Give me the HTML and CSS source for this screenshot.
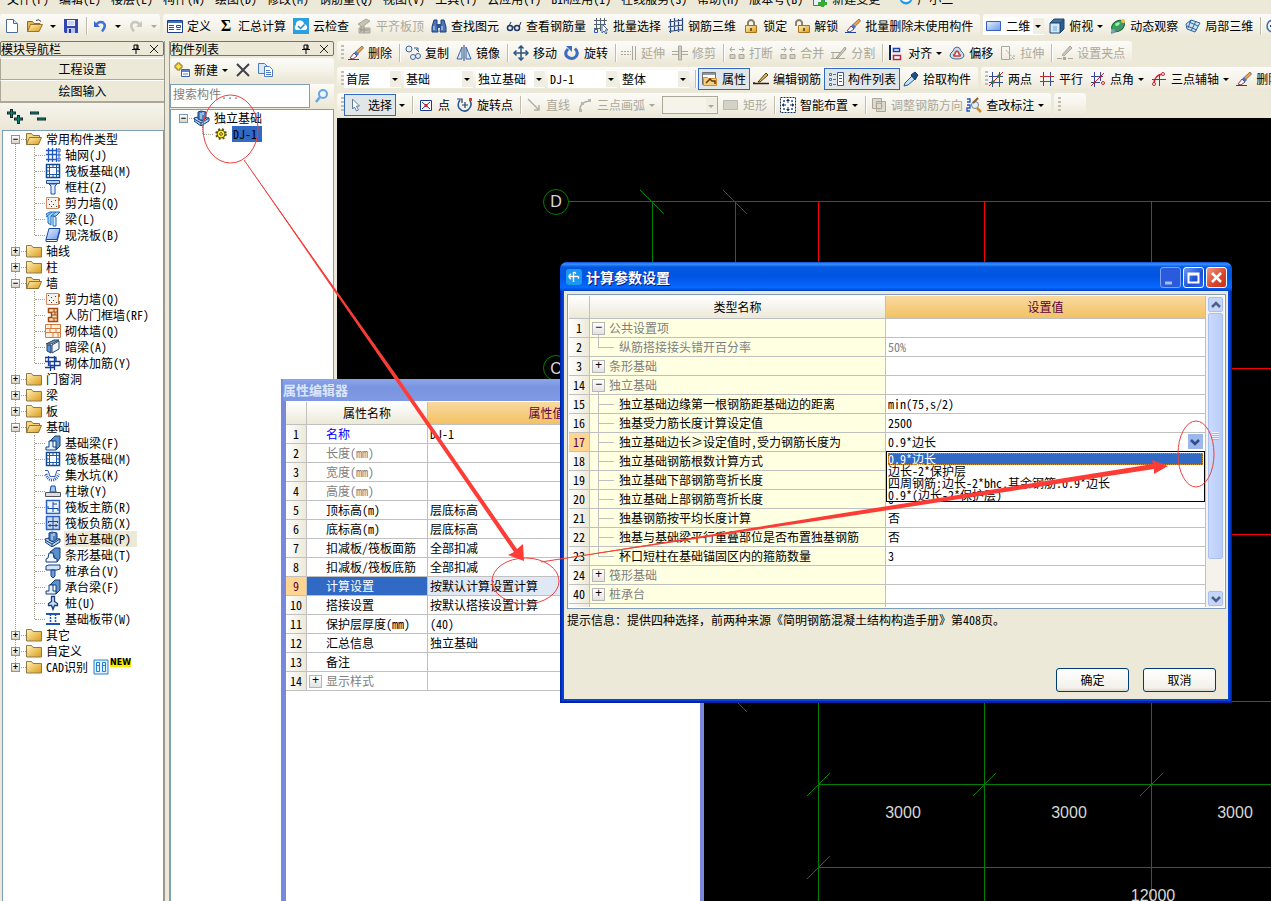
FILE: index.html
```html
<!DOCTYPE html>
<html lang="zh-CN">
<head>
<meta charset="utf-8">
<title>计算参数设置</title>
<link rel="stylesheet" href="styles.css">
</head>
<body>
<svg class="defs" aria-hidden="true">
<defs>
<linearGradient id="gy" x1="0" y1="0" x2="1" y2="1"><stop offset="0" stop-color="#fff3b8"/><stop offset="1" stop-color="#dd9a18"/></linearGradient>
<linearGradient id="gb" x1="0" y1="0" x2="1" y2="1"><stop offset="0" stop-color="#e4f1ff"/><stop offset="1" stop-color="#6f9bea"/></linearGradient>
<symbol id="new" viewBox="0 0 16 16"><path d="M2.500 1.500h7l4 4v9h-11z" fill="#fff" stroke="#4b6c98"/><path d="M9.500 1.500v4h4" fill="#d3e4f6" stroke="#4b6c98"/></symbol>
<symbol id="open" viewBox="0 0 16 16"><path d="M.5 13.500v-10h5l1.500 2h6v3" fill="#e8b64c" stroke="#8e6c28"/><path d="M.5 13.500l3-7h12l-3.500 7z" fill="url(#gy)" stroke="#9a742a"/><path d="M9 2.500q3-2 5 1" fill="none" stroke="#444"/></symbol>
<symbol id="folder" viewBox="0 0 16 16"><path d="M.5 2.500h5l1.500 2h8.500v9.500h-15z" fill="url(#gy)" stroke="#8f7a4c"/></symbol>
<symbol id="folderopen" viewBox="0 0 16 16"><path d="M.5 13.500v-11h5l1.500 2h6.500v2" fill="#f6d77e" stroke="#8f7138"/><path d="M.5 13.500l3-7h12l-3 7z" fill="url(#gy)" stroke="#8f7138"/></symbol>
<symbol id="save" viewBox="0 0 16 16"><path d="M1 1h14v14H2l-1-1z" fill="#3346b4"/><path d="M4 2h8v6H4z" fill="#eef3ff"/><path d="M5 4h6M5 6h6" stroke="#a6b8e0"/><path d="M4 10h8v5H4z" fill="#b7c4e6"/><path d="M6 11h2v4H6z" fill="#26358c"/></symbol>
<symbol id="undo" viewBox="0 0 16 16"><path d="M2 3v6h6z" fill="#3168d6"/><path d="M4 7q3-4 7-2.500 4 3-1 9" fill="none" stroke="#3c72dd" stroke-width="2.500"/></symbol>
<symbol id="redo" viewBox="0 0 16 16"><path d="M14 3v6H8z" fill="#c9c7ba"/><path d="M12 7q-3-4-7-2.500-4 3 1 9" fill="none" stroke="#c9c7ba" stroke-width="2.500"/></symbol>
<symbol id="define" viewBox="0 0 16 16"><path d="M.5 2.500h15v12H.5z" fill="#fff" stroke="#1d3f86"/><path d="M1 3h14v2H1z" fill="#3d6fc4"/><path d="M2 7.500h5M2 9.500h5M2 11.500h5" stroke="#27509e"/><path d="M9.500 7.500h4v2h-4zM9.500 11.500h4" fill="none" stroke="#27509e"/></symbol>
<symbol id="cloud" viewBox="0 0 16 16"><path d="M0 0h16v16H0z" fill="#2a9fe2"/><path d="M3 12a3 3 0 0 1 0-5 4 4 0 0 1 8-1 3.500 3.500 0 0 1 2 6z" fill="#fff"/><path d="M5 8l2.500 2.500 4-4" fill="none" stroke="#2487cb" stroke-width="1.500"/></symbol>
<symbol id="plate" viewBox="0 0 16 16"><path d="M2 6l8-5 4 2-8 6zM3 10h11v5H3z" fill="#c6c3b6" stroke="#aaa798"/><path d="M4 12h9M5 8v6M8 8v7" stroke="#96938a"/></symbol>
<symbol id="bino" viewBox="0 0 16 16"><path d="M3 2h3v4l1 8H1V9zM10 2h3l2 7v5H9l1-8z" fill="#4f76b4" stroke="#1d3f7c"/><path d="M6 6h4v4H6z" fill="#2b4f8f"/><path d="M3 8v4M11 8v4" stroke="#cfe0ff"/></symbol>
<symbol id="glasses" viewBox="0 0 16 16"><circle cx="4" cy="10" r="2.500" fill="#e6f0ff" stroke="#20365e" stroke-width="1.500"/><circle cx="11" cy="10" r="2.500" fill="#e6f0ff" stroke="#20365e" stroke-width="1.500"/><path d="M6 9h3M13 9l2-5M3 8l2-4" stroke="#20365e" fill="none"/></symbol>
<symbol id="batch" viewBox="0 0 16 16"><path d="M1 2.500h13M1 6.500h12M1 10.500h7M3.500 0v14M7.500 0v13M11.500 0v7" stroke="#55606d"/><path d="M1.500 11.500h3v3h-3z" fill="#fff" stroke="#1b55d0"/><path d="M9 6v9l2-2 2 3 1-1-2-3h3z" fill="#fff" stroke="#4b6ba0"/></symbol>
<symbol id="grid3d" viewBox="0 0 16 16"><path d="M2.500 1v14M6.500 0v13M10.500 1v13M14.500 0v13M1 4l14-2M0 9l15-2M1 13.500l14-2" stroke="#24457e" stroke-width="1.200" fill="none"/></symbol>
<symbol id="lock" viewBox="0 0 16 16"><path d="M5 8V4q3-4 6 0v4" fill="none" stroke="#8c826b" stroke-width="2"/><path d="M2.500 7.500h11v7h-11z" fill="url(#gy)" stroke="#a7741d"/><path d="M8 10v3" stroke="#533a0c" stroke-width="1.500"/></symbol>
<symbol id="unlock" viewBox="0 0 16 16"><path d="M2 8V4q3-4 6 0v3" fill="none" stroke="#8c826b" stroke-width="2"/><path d="M4.500 7.500h11v7h-11z" fill="url(#gy)" stroke="#a7741d"/><path d="M10 10v3" stroke="#533a0c" stroke-width="1.500"/></symbol>
<symbol id="brush" viewBox="0 0 16 16"><path d="M14 1l1.500 2-6 6-2-2z" fill="#e7a35b" stroke="#6f4a22" stroke-width=".7"/><path d="M8 6l3 3-2 2-3-3z" fill="#4778d0"/><path d="M6 8l3 3-4 3-3-1z" fill="#f2f2fb" stroke="#8b3f5b"/><path d="M0 14.500h11" stroke="#20439d"/></symbol>
<symbol id="rect" viewBox="0 0 16 16"><path d="M.5 3.500h14v9H.5z" fill="url(#gb)" stroke="#365ec3"/></symbol>
<symbol id="cube" viewBox="0 0 16 16"><path d="M1 5l4-4h10l-4 4z" fill="#456f9f" stroke="#1e466f"/><path d="M11 5l4-4v10l-4 4z" fill="#2d5e94" stroke="#1e466f"/><path d="M1 5h10v10H1z" fill="#d4e9f8" stroke="#1e466f"/><path d="M4 8h4v5H4z" fill="#9fc9e8"/></symbol>
<symbol id="orbit" viewBox="0 0 16 16"><ellipse cx="8" cy="8" rx="7" ry="5" fill="#2fa758" stroke="#146033" transform="rotate(-35 8 8)"/><path d="M5 6q3-3 5-1-1 3-4 3z" fill="#a9e6b3"/><path d="M1 15q7-1 13-11" fill="none" stroke="#6b7a84" stroke-width="1.500"/><circle cx="13" cy="3" r="2" fill="#f0c443"/><circle cx="3" cy="13" r="2" fill="#75a5c0"/></symbol>
<symbol id="local" viewBox="0 0 16 16"><path d="M1 6l5-4 9 3-5 9-8-3z" fill="#cfe4f5" stroke="#2e649c"/><path d="M6 2l-3 8M11 3l-5 10M2 8l10 4M4 4l9 4" stroke="#2e649c" fill="none"/></symbol>
<symbol id="copy" viewBox="0 0 16 16"><circle cx="4" cy="4" r="3" fill="#e7effa" stroke="#43648f"/><circle cx="8" cy="12" r="2.500" fill="#e7effa" stroke="#43648f"/><circle cx="13" cy="11" r="2.500" fill="#e7effa" stroke="#43648f"/><path d="M9 3h4v3M11 4l3 3" fill="none" stroke="#315f9f"/></symbol>
<symbol id="mirror" viewBox="0 0 16 16"><path d="M6 2v12H1zM10 2v12h5z" fill="#d9e7fb" stroke="#3763a5"/><path d="M8 0v16" stroke="#1e3e80"/></symbol>
<symbol id="move" viewBox="0 0 16 16"><path d="M8 1v14M1 8h14" stroke="#2b527f" stroke-width="1.500"/><path d="M5.500 3.500L8 1l2.500 2.500M5.500 12.500L8 15l2.500-2.500M3.500 5.500L1 8l2.500 2.500M12.500 5.500L15 8l-2.500 2.500" fill="none" stroke="#2b527f" stroke-width="1.500"/></symbol>
<symbol id="rotate" viewBox="0 0 16 16"><path d="M4 4q-4 4-1 7.500 5 4 9 0 3-4-1-8" fill="none" stroke="#3e6cc4" stroke-width="3"/><path d="M2 1h6v6z" fill="#3e6cc4"/></symbol>
<symbol id="extend" viewBox="0 0 16 16"><path d="M0 6.500h5M0 9.500h5M6 6.500h4M6 9.500h4" stroke="#aaa798" stroke-dasharray="2 1"/><path d="M11.500 1v14M14.500 1v14" stroke="#aaa798"/></symbol>
<symbol id="trim" viewBox="0 0 16 16"><path d="M0 6.500h6M10 6.500h6M0 9.500h6M10 9.500h6" stroke="#aaa798"/><path d="M6.500 1v14h3V1z" fill="#d0cdc2" stroke="#aaa798"/></symbol>
<symbol id="break" viewBox="0 0 16 16"><path d="M1 4.500h5M10 4.500h5M3 2L1 4.500 3 7M13 2l2 2.500L13 7" fill="none" stroke="#aaa798"/><path d="M1 9.500h5v4H1zM10 9.500h5v4h-5z" fill="#d4d1c6" stroke="#aaa798"/></symbol>
<symbol id="join" viewBox="0 0 16 16"><path d="M1 4.500h5M10 4.500h5M4 2l2 2.500L4 7M12 2l-2 2.500L12 7" fill="none" stroke="#aaa798"/><path d="M1 9.500h5v4H1zM10 9.500h5v4h-5z" fill="#d4d1c6" stroke="#aaa798"/></symbol>
<symbol id="split" viewBox="0 0 16 16"><path d="M0 7.500h12M0 13.500h14M2 7v6" stroke="#aaa798"/><path d="M5 13L14 2l1 2-8 9z" fill="#d4d1c6" stroke="#9b9889"/></symbol>
<symbol id="align" viewBox="0 0 16 16"><path d="M2 0v15" stroke="#0b2254" stroke-width="2"/><path d="M5.500 3.500h6v3h-6z" fill="#fff" stroke="#2042b8" stroke-width="1.500"/><path d="M5.500 10.500h7v4h-7z" fill="#fff" stroke="#bb2440" stroke-width="1.500"/></symbol>
<symbol id="offset" viewBox="0 0 16 16"><path d="M8 2q3 0 4 4 3 2 3 5-1 3-7 3T1 11q0-3 3-5 1-4 4-4z" fill="#c9ddeb" stroke="#3c6b91"/><path d="M8 6q2 1 2 3 2 1 1 2H5q-1-1 1-2 0-2 2-3z" fill="#fff" stroke="#c63b3b" stroke-width="1.500"/></symbol>
<symbol id="stretch" viewBox="0 0 16 16"><path d="M1.500 14.500v-13h8v13z" fill="none" stroke="#aaa798" /><path d="M6 5l8 9M14 10v4h-4" fill="none" stroke="#aaa798" stroke-dasharray="2 1"/></symbol>
<symbol id="grippt" viewBox="0 0 16 16"><path d="M5 10L13 1l2 2-8 8z" fill="#cac7bb" stroke="#aaa798"/><path d="M0 13.500h5M11 13.500h5" stroke="#aaa798"/><path d="M6 12h3v3H6z" fill="#aaa798"/></symbol>
<symbol id="prop" viewBox="0 0 16 16"><path d="M.5 1.500h13v12H.5z" fill="#fff" stroke="#6f6f72"/><path d="M1 2h12v2H1z" fill="#8d9aa7"/><path d="M1.500 6.500h4l1 1h8v7h-13z" fill="#f8cf80" stroke="#d98a2a"/><path d="M4 12l4-4 2 2 3 0v3" fill="none" stroke="#5c390c" stroke-width="1.500"/></symbol>
<symbol id="editbar" viewBox="0 0 16 16"><path d="M0 12.500h16M1 11v2" stroke="#331d16" stroke-width="1.300"/><path d="M5 11L13 2l2 2-8 7z" fill="#e9c05b" stroke="#51341a"/></symbol>
<symbol id="list" viewBox="0 0 16 16"><path d="M1.500 2.500h2v2h-2zM1.500 7.500h2v2h-2zM1.500 12.500h2v2h-2z" fill="none" stroke="#53719d"/><path d="M5 3.500h3M5 8.500h3M5 13.500h3" stroke="#53719d"/><path d="M9.500 1.500h6v13h-6z" fill="#fff" stroke="#365c99"/><path d="M11 4.500h3M11 7.500h3M11 10.500h3" stroke="#365c99"/></symbol>
<symbol id="pick" viewBox="0 0 16 16"><path d="M2 12l7-7 3 3-7 6-4 1z" fill="#bfe2f4" stroke="#205d95"/><path d="M8 4l4-3 3 3-3 5z" fill="#1d5087" stroke="#153b67"/></symbol>
<symbol id="axis2" viewBox="0 0 16 16"><path d="M1 5.500h14M1 11.500h14M4.500 1v15M11.500 1v15" stroke="#33479f"/><path d="M1 15L15 1" stroke="#c5242d"/><circle cx="5" cy="11" r="1.700" fill="#2c7d2c"/><circle cx="11" cy="5" r="1.700" fill="#2c7d2c"/></symbol>
<symbol id="axispar" viewBox="0 0 16 16"><path d="M4.500 1v14M11.500 1v14" stroke="#33479f"/><path d="M1 5.500h14M1 10.500h14" stroke="#c5242d"/></symbol>
<symbol id="axisang" viewBox="0 0 16 16"><path d="M1 5.500h12M1 11.500h9M4.500 1v15M10.500 1v9" stroke="#33479f"/><path d="M1 15L14 2" stroke="#c5242d"/><circle cx="13" cy="12" r="1.500" fill="none" stroke="#c5242d"/></symbol>
<symbol id="axis3" viewBox="0 0 16 16"><path d="M1 8.500h14M8.500 3v12" stroke="#33479f"/><path d="M3 13q0-9 9-10" fill="none" stroke="#c5242d" stroke-width="1.500"/><circle cx="3" cy="13" r="1.500" fill="#fff" stroke="#c5242d"/><circle cx="12" cy="3" r="1.500" fill="#fff" stroke="#c5242d"/></symbol>
<symbol id="cursor" viewBox="0 0 16 16"><path d="M4.500 2v10l2-2 2 4 2-1-2-4h3z" fill="#fff" stroke="#5d7fa5"/></symbol>
<symbol id="point" viewBox="0 0 16 16"><path d="M2.500 3.500h11v10h-11z" fill="#fff" stroke="#1c3d8d"/><path d="M4 5l8 7M12 5l-8 7" stroke="#1c3d8d"/><path d="M6.500 7h3v3h-3z" fill="#e02030"/></symbol>
<symbol id="rotpt" viewBox="0 0 16 16"><path d="M3 3q-3 4-1 8 4 5 9 2 5-5 2-9" fill="none" stroke="#27589a" stroke-width="1.600"/><path d="M0 2h5v4M8 5v6M5 8h6" fill="none" stroke="#27406c" stroke-width="1.200"/><path d="M12 1h3v3h-3z" fill="#d23c3c"/></symbol>
<symbol id="line" viewBox="0 0 16 16"><path d="M2 2l11 11M13 8v5H8" stroke="#b1aea1" fill="none" stroke-width="1.400"/></symbol>
<symbol id="arc" viewBox="0 0 16 16"><path d="M3 14Q2 5 13 4" fill="none" stroke="#b1aea1" stroke-width="1.400"/><path d="M2 12h3v3H2zM11 2h3v3h-3zM4 5h3v3H4z" fill="#b9b6aa"/></symbol>
<symbol id="rectg" viewBox="0 0 16 16"><path d="M.5 3.500h14v9H.5z" fill="#d4d1c6" stroke="#bcb9ad"/></symbol>
<symbol id="smart" viewBox="0 0 16 16"><path d="M.5 .5h15v15H.5z" fill="#fff" stroke="#122d55" stroke-dasharray="2 1"/><path d="M8 2v4M8 10v4M2 8h4M10 8h4" stroke="#122d55"/><path d="M6 4l2-2 2 2zM6 12l2 2 2-2zM4 6L2 8l2 2zM12 6l2 2-2 2z" fill="#122d55"/><path d="M3 3h2v2H3zM11 3h2v2h-2zM3 11h2v2H3zM11 11h2v2h-2z" fill="#4d79bd"/></symbol>
<symbol id="dir" viewBox="0 0 16 16"><path d="M1.500 1.500h9v10h-9zM5.500 4.500h9v10h-9z" fill="#dcd9cd" stroke="#aaa798"/><circle cx="8" cy="9" r="3" fill="none" stroke="#aaa798"/></symbol>
<symbol id="fixdim" viewBox="0 0 16 16"><path d="M1 2h3v3H1M1 8h3v3H1v3h3" fill="none" stroke="#1f55c5" stroke-width="1.300"/><circle cx="9" cy="8" r="3.500" fill="#dff0f6" stroke="#72808b"/><path d="M11 11l4 4" stroke="#d08a28" stroke-width="2.500"/><path d="M7 6l5-5" stroke="#8a5a24" stroke-width="2"/></symbol>
<symbol id="magn" viewBox="0 0 16 16"><circle cx="9" cy="6" r="4" fill="#eaf5ff" stroke="#67a6e0" stroke-width="2"/><path d="M6 9l-4 5" stroke="#67a6e0" stroke-width="2.500"/></symbol>
<symbol id="newitem" viewBox="0 0 16 16"><path d="M7.500 7.500h8v7h-8z" fill="#fff" stroke="#3a62b0"/><path d="M8 8h7v2H8z" fill="#5584d8"/><path d="M9 12h5" stroke="#5584d8"/><path d="M3 1h3v2h2v3H6v2H3V6H1V3h2z" fill="#ffe14a" stroke="#93780d"/></symbol>
<symbol id="del" viewBox="0 0 16 16"><path d="M2 2l12 12M14 2L2 14" stroke="#3f4148" stroke-width="2"/></symbol>
<symbol id="pages" viewBox="0 0 16 16"><path d="M.5 1.500h6l3 3v7h-9z" fill="#dce9fa" stroke="#4d7cc0"/><path d="M6.500 4.500h5l3 3v7h-8z" fill="#fff" stroke="#4d7cc0"/><path d="M8 8.500h4M8 10.500h5M8 12.500h5" stroke="#4d7cc0"/></symbol>
<symbol id="pin" viewBox="0 0 10 10"><path d="M3 1h4v4H3zM1 5.500h8M5 6v4M6 1v4" fill="none" stroke="#000"/></symbol>
<symbol id="close" viewBox="0 0 10 10"><path d="M1 1l8 8M9 1L1 9" stroke="#222"/></symbol>
<symbol id="found" viewBox="0 0 16 16"><path d="M0 8l4-1 11 1v3l-8 5-7-5z" fill="#b5d2ef" stroke="#123f7b"/><path d="M0 9l7 4 8-5M7 13v3" fill="none" stroke="#123f7b"/><path d="M4 2l3-1 5 1v6l-4 3-4-2z" fill="#4b81c0" stroke="#123f7b"/><path d="M7 3v6M9 2v3" stroke="#e9f3ff"/></symbol>
<symbol id="gear" viewBox="0 0 16 16"><circle cx="8" cy="8" r="4" fill="#ffe62a" stroke="#5a5100"/><circle cx="8" cy="8" r="5" fill="none" stroke="#5a5100" stroke-dasharray="2 2" stroke-width="1.500"/><circle cx="8" cy="8" r="1.300" fill="#fff" stroke="#5a5100"/></symbol>
<symbol id="t-axis" viewBox="0 0 16 16"><path d="M1 3.500h11M1 7.500h11M1 12.500h11M3.500 1v14M7.500 1v14M11.500 1v14" stroke="#2459c4" stroke-width="1.300"/><path d="M13 2h2v3h-2zM13 7h2v2h-2zM13 11h2v3h-2z" fill="none" stroke="#2459c4"/></symbol>
<symbol id="t-raft" viewBox="0 0 16 16"><path d="M1.500 1.500h13v13h-13z" fill="#fff" stroke="#0d4a94" stroke-width="1.500"/><path d="M4.500 4.500h7v7h-7zM4.500 2v3M8 2v3M11.500 2v3M4.500 11v3M8 11v3M11.500 11v3M2 4.500h3M2 8h3M2 11.500h3M11 4.500h3M11 8h3M11 11.500h3" fill="none" stroke="#1b5cab"/></symbol>
<symbol id="t-col" viewBox="0 0 16 16"><path d="M1.500 1.500h13v3h-13z" fill="#b9d3f6" stroke="#1c4fa8"/><path d="M4 5h8l-2 2v8H6V7z" fill="#e4efff" stroke="#1c4fa8"/></symbol>
<symbol id="t-shear" viewBox="0 0 16 16"><path d="M1.500 2.500h12v11h-12z" fill="#f4f0ea" stroke="#c78b68"/><path d="M3 4l1 1M6 6l1 1M4 9l1 1M8 9l1 1M10 5l1 1M6 11l1 1M11 11l1 1" stroke="#444"/><path d="M14 3v3M14 10v3" stroke="#cc6c20" stroke-width="2"/></symbol>
<symbol id="t-beam" viewBox="0 0 16 16"><path d="M1 3l4-2h10l-4 4H6v9l-3-2V6z" fill="#a9d2f8" stroke="#156cc0"/><path d="M8 5l3 1v9H8zM1 6l6-5M6 5l5-4" stroke="#156cc0" fill="#d9edff"/></symbol>
<symbol id="t-slab" viewBox="0 0 16 16"><path d="M4 1.500h11l-3 11H1z" fill="url(#gb)" stroke="#1748a4"/><path d="M1 12.500v2h11l3-11" fill="none" stroke="#1748a4"/></symbol>
<symbol id="t-door" viewBox="0 0 16 16"><path d="M3.500 1.500h9v13h-9v-4h3v-5h-3z" fill="#ffddb2" stroke="#9e4a12" stroke-width="1.500"/><path d="M7 5h5M7 8h5M7 11h5M9 2v3M10 5v3M9 11v3" stroke="#9e4a12"/></symbol>
<symbol id="t-brick" viewBox="0 0 16 16"><path d="M.5 1.500h15v13H.5z" fill="#fff1e2" stroke="#d27c42"/><path d="M1 5.500h14M1 9.500h14M6 2v3M11 6v3M5 6v3M8 10v4M13 10v4" stroke="#d27c42"/></symbol>
<symbol id="t-dark" viewBox="0 0 16 16"><path d="M1 5l8-4h5l-8 4z" fill="#8aa0b9" stroke="#24405f"/><path d="M2 6h4v8l-4-2z" fill="#5a91de" stroke="#24405f"/><path d="M7 6l7-4v8l-7 4z" fill="#eef3f8" stroke="#24405f"/></symbol>
<symbol id="t-reinf" viewBox="0 0 16 16"><path d="M0 2.500h11v4H0zM5 6.500h10v4H5zM5.500 10v6M9.500 1v14M3.500 1v10M0 12.500h9" fill="none" stroke="#143f99" stroke-width="1.300"/></symbol>
<symbol id="t-fbeam" viewBox="0 0 16 16"><path d="M5 6l5-5h5v10l-4 4V6z" fill="#5c93c9" stroke="#103f7d"/><path d="M1 12h3V6h4v6h3v3H1z" fill="#e5f1ff" stroke="#103f7d"/></symbol>
<symbol id="t-pit" viewBox="0 0 16 16"><path d="M0 3.500h3l2 6h5l2-6h3" fill="none" stroke="#315bb4"/><path d="M1 7q2 6 6 6t7-6" fill="none" stroke="#315bb4" stroke-dasharray="1 1" stroke-width="3"/></symbol>
<symbol id="t-pier" viewBox="0 0 16 16"><path d="M5 9l1-6h4l1 6z" fill="#a6c6ee" stroke="#174a9b"/><path d="M.5 9.500h15v4H.5z" fill="#dbdfe5" stroke="#50545a"/></symbol>
<symbol id="t-main" viewBox="0 0 16 16"><path d="M1.500 1.500h13v13h-13z" fill="#eaf3ff" stroke="#2b63c4" stroke-width="1.500"/><path d="M8 3v10M3 9.500h10M8 5h4M3 7v3M13 9v3" fill="none" stroke="#174aa4"/></symbol>
<symbol id="t-neg" viewBox="0 0 16 16"><path d="M1.500 1.500h13v13h-13z" fill="#cbd8ea" stroke="#2b63c4" stroke-width="1.500"/><path d="M8 2v12M3 6.500h10M3 10.500h10M3.500 6v2M12.500 6v2M5 9v3M11 9v3" stroke="#174aa4"/></symbol>
<symbol id="t-strip" viewBox="0 0 16 16"><path d="M5 5l5-4h5v10l-3 4-4-8z" fill="#588fca" stroke="#103f7d"/><path d="M1 12l2-1 1-5h4l1 5 3 1v3H1z" fill="#f1f7ff" stroke="#103f7d"/></symbol>
<symbol id="t-cap" viewBox="0 0 16 16"><path d="M1 3l3-1h11v4l-3 1H1z" fill="#d3e5f8" stroke="#153f88"/><path d="M6 7h4v6l-2 2-2-2z" fill="#6f9bd5" stroke="#153f88"/></symbol>
<symbol id="t-pile" viewBox="0 0 16 16"><path d="M6.500 1.500h3v5l3 2v2h-3l-1.500 4-1.500-4h-3v-2l3-2z" fill="#c7dcf5" stroke="#14417c" stroke-width="1.300"/></symbol>
<symbol id="t-band" viewBox="0 0 16 16"><path d="M1 3h14M1 13h14" stroke="#1d57b5" stroke-width="2"/><path d="M5.500 3v10M10.500 3v10" stroke="#1d57b5" stroke-dasharray="2 1" stroke-width="1.500"/></symbol>
<symbol id="t-cad" viewBox="0 0 16 16"><path d="M1 1h14v14H1z" fill="#dff0ff" stroke="#2280d2"/><path d="M3.500 3.500h3v9h-3zM9.500 3.500h3v9h-3zM3 6.500h4M9 6.500h4" fill="none" stroke="#2280d2"/></symbol>
<symbol id="app" viewBox="0 0 16 16"><rect width="16" height="16" rx="3" fill="#1c97ef"/><path d="M7.500 3v10M8 3l2 1.500M3 7.500h9q1.500 1 0 2M5 5Q3 6 3 7.500T5 10" fill="none" stroke="#fff" stroke-width="1.400"/></symbol>
<symbol id="zoomin" viewBox="0 0 16 16"><circle cx="7" cy="8" r="6" fill="#e9f2ff" stroke="#47669b" stroke-width="1.500"/><path d="M4 8h6" stroke="#174a9b" stroke-width="2"/></symbol>
<symbol id="doc" viewBox="0 0 16 16"><path d="M.5 .5h11v14H.5z" fill="#e6f1fb" stroke="#2d77b8"/><path d="M8 8h3v3h3v3h-3v2H8v-2H5v-3h3z" fill="#35ad2e"/></symbol>
<symbol id="face" viewBox="0 0 16 16"><circle cx="8" cy="7" r="6.500" fill="#249be8"/><path d="M4 8q4 4 8 0" fill="none" stroke="#fff" stroke-width="2"/></symbol>
</defs>
</svg>

<nav class="menu">
<button>文件(F)</button><button>编辑(E)</button><button>楼层(L)</button><button>构件(N)</button><button>绘图(D)</button><button>修改(M)</button><button>钢筋量(Q)</button><button>视图(V)</button><button>工具(T)</button><button>云应用(Y)</button><button>BIM应用(I)</button><button>在线服务(S)</button><button>帮助(H)</button><button>版本号(B)</button><button><svg class="ic"><use href="#doc"/></svg>新建变更</button><button class="user"><svg class="ic"><use href="#face"/></svg>广小二</button>
</nav>

<div class="bars">
<div class="bar files">
<button aria-label="新建"><svg class="ic"><use href="#new"/></svg></button><button aria-label="打开"><svg class="ic"><use href="#open"/></svg><i class="dn"></i></button><button aria-label="保存"><svg class="ic"><use href="#save"/></svg></button><i class="sep"></i><button aria-label="撤销"><svg class="ic"><use href="#undo"/></svg><i class="dn"></i></button><button aria-label="恢复" disabled><svg class="ic"><use href="#redo"/></svg><i class="dn"></i></button>
</div>
<div class="bar">
<button><svg class="ic"><use href="#define"/></svg>定义</button><button><b class="ic sigma">Σ</b>汇总计算</button><button><svg class="ic"><use href="#cloud"/></svg>云检查</button><button disabled><svg class="ic"><use href="#plate"/></svg>平齐板顶</button><button><svg class="ic"><use href="#bino"/></svg>查找图元</button><button><svg class="ic"><use href="#glasses"/></svg>查看钢筋量</button><button><svg class="ic"><use href="#batch"/></svg>批量选择</button><button><svg class="ic"><use href="#grid3d"/></svg>钢筋三维</button><button><svg class="ic"><use href="#lock"/></svg>锁定</button><button><svg class="ic"><use href="#unlock"/></svg>解锁</button><button><svg class="ic"><use href="#brush"/></svg>批量删除未使用构件</button>
</div>
<div class="bar grow views">
<span class="combo view"><svg class="ic"><use href="#rect"/></svg><select aria-label="视图"><option>二维</option></select></span><button><svg class="ic"><use href="#cube"/></svg>俯视<i class="dn"></i></button><button><svg class="ic"><use href="#orbit"/></svg>动态观察</button><button><svg class="ic"><use href="#local"/></svg>局部三维</button><i class="sep"></i><button aria-label="缩放"><svg class="ic"><use href="#zoomin"/></svg></button>
</div>
</div>

<div class="main">
<aside class="pane nav">
<header class="cap"><span>模块导航栏</span><button aria-label="固定"><svg><use href="#pin"/></svg></button><button aria-label="关闭"><svg><use href="#close"/></svg></button></header>
<button class="sect">工程设置</button>
<button class="sect">绘图输入</button>
<div class="plusminus"><button aria-label="全部展开"><svg><path d="M0 5h9M4.500 1v9M7 11h9M11.500 7v9" stroke="#0a2a2a" stroke-width="3"/><path d="M1 5h7M4.500 2v7M8 11h7M11.500 8v7" stroke="#128a80"/></svg></button><button aria-label="全部折叠"><svg><path d="M1 5h9M8 11h9" stroke="#0a2a2a" stroke-width="3"/><path d="M2 5h7M9 11h7" stroke="#128a80"/></svg></button></div>
<ul class="tree">
<li><div class="node"><button class="exp">−</button><svg class="ic"><use href="#folderopen"/></svg><span>常用构件类型</span></div>
<ul>
<li><svg class="ic"><use href="#t-axis"/></svg><span>轴网(J)</span></li>
<li><svg class="ic"><use href="#t-raft"/></svg><span>筏板基础(M)</span></li>
<li><svg class="ic"><use href="#t-col"/></svg><span>框柱(Z)</span></li>
<li><svg class="ic"><use href="#t-shear"/></svg><span>剪力墙(Q)</span></li>
<li><svg class="ic"><use href="#t-beam"/></svg><span>梁(L)</span></li>
<li><svg class="ic"><use href="#t-slab"/></svg><span>现浇板(B)</span></li>
</ul></li>
<li><div class="node"><button class="exp">+</button><svg class="ic"><use href="#folder"/></svg><span>轴线</span></div></li>
<li><div class="node"><button class="exp">+</button><svg class="ic"><use href="#folder"/></svg><span>柱</span></div></li>
<li><div class="node"><button class="exp">−</button><svg class="ic"><use href="#folderopen"/></svg><span>墙</span></div>
<ul>
<li><svg class="ic"><use href="#t-shear"/></svg><span>剪力墙(Q)</span></li>
<li><svg class="ic"><use href="#t-door"/></svg><span>人防门框墙(RF)</span></li>
<li><svg class="ic"><use href="#t-brick"/></svg><span>砌体墙(Q)</span></li>
<li><svg class="ic"><use href="#t-dark"/></svg><span>暗梁(A)</span></li>
<li><svg class="ic"><use href="#t-reinf"/></svg><span>砌体加筋(Y)</span></li>
</ul></li>
<li><div class="node"><button class="exp">+</button><svg class="ic"><use href="#folder"/></svg><span>门窗洞</span></div></li>
<li><div class="node"><button class="exp">+</button><svg class="ic"><use href="#folder"/></svg><span>梁</span></div></li>
<li><div class="node"><button class="exp">+</button><svg class="ic"><use href="#folder"/></svg><span>板</span></div></li>
<li><div class="node"><button class="exp">−</button><svg class="ic"><use href="#folderopen"/></svg><span>基础</span></div>
<ul>
<li><svg class="ic"><use href="#t-fbeam"/></svg><span>基础梁(F)</span></li>
<li><svg class="ic"><use href="#t-raft"/></svg><span>筏板基础(M)</span></li>
<li><svg class="ic"><use href="#t-pit"/></svg><span>集水坑(K)</span></li>
<li><svg class="ic"><use href="#t-pier"/></svg><span>柱墩(Y)</span></li>
<li><svg class="ic"><use href="#t-main"/></svg><span>筏板主筋(R)</span></li>
<li><svg class="ic"><use href="#t-neg"/></svg><span>筏板负筋(X)</span></li>
<li><svg class="ic"><use href="#found"/></svg><span class="cur">独立基础(P)</span></li>
<li><svg class="ic"><use href="#t-strip"/></svg><span>条形基础(T)</span></li>
<li><svg class="ic"><use href="#t-cap"/></svg><span>桩承台(V)</span></li>
<li><svg class="ic"><use href="#t-fbeam"/></svg><span>承台梁(F)</span></li>
<li><svg class="ic"><use href="#t-pile"/></svg><span>桩(U)</span></li>
<li><svg class="ic"><use href="#t-band"/></svg><span>基础板带(W)</span></li>
</ul></li>
<li><div class="node"><button class="exp">+</button><svg class="ic"><use href="#folder"/></svg><span>其它</span></div></li>
<li><div class="node"><button class="exp">+</button><svg class="ic"><use href="#folder"/></svg><span>自定义</span></div></li>
<li><div class="node"><button class="exp">+</button><svg class="ic"><use href="#folder"/></svg><span>CAD识别</span><svg class="ic cad"><use href="#t-cad"/></svg><em class="badge">NEW</em></div></li>
</ul>
</aside>

<aside class="pane list">
<header class="cap"><span>构件列表</span><button aria-label="固定"><svg><use href="#pin"/></svg></button><button aria-label="关闭"><svg><use href="#close"/></svg></button></header>
<div class="bar tools"><button><svg class="ic"><use href="#newitem"/></svg>新建<i class="dn"></i></button><button aria-label="删除"><svg class="ic"><use href="#del"/></svg></button><button aria-label="复制"><svg class="ic"><use href="#pages"/></svg></button></div>
<div class="search"><input type="text" placeholder="搜索构件..." aria-label="搜索构件"><button aria-label="搜索"><svg class="ic"><use href="#magn"/></svg></button></div>
<ul class="tree">
<li><div class="node"><button class="exp">−</button><svg class="ic"><use href="#found"/></svg><span>独立基础</span></div>
<ul><li><svg class="ic"><use href="#gear"/></svg><span class="sel">DJ-1</span></li></ul></li>
</ul>
</aside>

<section class="work">
<div class="bars edit">
<div class="bar"><i class="grip"></i>
<button><svg class="ic"><use href="#brush"/></svg>删除</button><i class="sep"></i><button><svg class="ic"><use href="#copy"/></svg>复制</button><button><svg class="ic"><use href="#mirror"/></svg>镜像</button><i class="sep"></i><button><svg class="ic"><use href="#move"/></svg>移动</button><button><svg class="ic"><use href="#rotate"/></svg>旋转</button><i class="sep"></i><button disabled><svg class="ic"><use href="#extend"/></svg>延伸</button><button disabled><svg class="ic"><use href="#trim"/></svg>修剪</button><i class="sep"></i><button disabled><svg class="ic"><use href="#break"/></svg>打断</button><button disabled><svg class="ic"><use href="#join"/></svg>合并</button><button disabled><svg class="ic"><use href="#split"/></svg>分割</button><i class="sep"></i><button><svg class="ic"><use href="#align"/></svg>对齐<i class="dn"></i></button><button><svg class="ic"><use href="#offset"/></svg>偏移</button><button disabled><svg class="ic"><use href="#stretch"/></svg>拉伸</button><i class="sep"></i><button disabled><svg class="ic"><use href="#grippt"/></svg>设置夹点</button></div>
</div>
<div class="bars">
<div class="bar"><i class="grip"></i>
<span class="combo short"><select aria-label="楼层"><option>首层</option></select></span><span class="combo"><select aria-label="类别"><option>基础</option></select></span><span class="combo"><select aria-label="类型"><option>独立基础</option></select></span><span class="combo"><select aria-label="构件"><option>DJ-1</option></select></span><span class="combo"><select aria-label="范围"><option>整体</option></select></span><i class="sep thin"></i><button class="on"><svg class="ic"><use href="#prop"/></svg>属性</button><button class="tight"><svg class="ic"><use href="#editbar"/></svg>编辑钢筋</button><button class="on"><svg class="ic"><use href="#list"/></svg>构件列表</button><button><svg class="ic"><use href="#pick"/></svg>拾取构件</button></div>
<div class="bar grow"><i class="grip"></i>
<button><svg class="ic"><use href="#axis2"/></svg>两点</button><button><svg class="ic"><use href="#axispar"/></svg>平行</button><button><svg class="ic"><use href="#axisang"/></svg>点角<i class="dn"></i></button><button><svg class="ic"><use href="#axis3"/></svg>三点辅轴<i class="dn"></i></button><button><svg class="ic"><use href="#brush"/></svg>删除</button></div>
</div>
<div class="bars">
<div class="bar"><i class="grip"></i>
<button class="on"><svg class="ic"><use href="#cursor"/></svg>选择</button><button aria-label="选择方式"><i class="dn"></i></button><i class="sep"></i><button><svg class="ic"><use href="#point"/></svg>点</button><button><svg class="ic"><use href="#rotpt"/></svg>旋转点</button><i class="sep"></i><button disabled><svg class="ic"><use href="#line"/></svg>直线</button><button disabled><svg class="ic"><use href="#arc"/></svg>三点画弧<i class="dn"></i></button><span class="combo off"><select aria-label="半径" disabled><option></option></select></span><button disabled><svg class="ic"><use href="#rectg"/></svg>矩形</button><i class="sep"></i><button><svg class="ic"><use href="#smart"/></svg>智能布置<i class="dn"></i></button><i class="sep"></i><button disabled class="tight"><svg class="ic"><use href="#dir"/></svg>调整钢筋方向</button><button><svg class="ic"><use href="#fixdim"/></svg>查改标注<i class="dn"></i></button></div>
<div class="bar stub"><i class="grip"></i></div>
</div>
<div class="canvas">
<svg><g transform="translate(-337 -118)" fill="none" stroke="#008000" shape-rendering="crispEdges">
<path d="M569 201.500h702M652.500 202v70M735.500 202v70M818.500 703v198M984.500 703v198M1151.500 703v198M818 784.500h453M818 867.500h453"/>
<path d="M640 190l24 24M723 190l24 24M723 688l24 24M807 796l23-23M973 796l23-23M1140 796l23-23M807 879l23-23"/>
<path d="M818.500 202v70M984.500 202v70M1151.500 202v70M1220 368.500h51M1220 534.500h51M1220 701.500h51" stroke="#f00"/>
<g shape-rendering="auto"><circle cx="556" cy="202" r="12.500"/><circle cx="556" cy="368" r="12.500"/></g>
<g class="cadtext" stroke="none"><text x="556" y="207">D</text><text x="556" y="374">C</text><text x="903" y="818">3000</text><text x="1069" y="818">3000</text><text x="1235" y="818">3000</text><text x="1153" y="901">12000</text></g>
</g></svg>
</div>
</section>
</div>

<section class="win props">
<header>属性编辑器</header>
<div class="sheet">
<table>
<colgroup><col class="c-num"><col class="c-key"><col class="c-val"><col></colgroup>
<thead><tr><th></th><th>属性名称</th><th class="hot">属性值</th><th></th></tr></thead>
<tbody>
<tr><th>1</th><td class="blue">名称</td><td>DJ-1</td><td></td></tr>
<tr><th>2</th><td class="dim">长度(mm)</td><td></td><td></td></tr>
<tr><th>3</th><td class="dim">宽度(mm)</td><td></td><td></td></tr>
<tr><th>4</th><td class="dim">高度(mm)</td><td></td><td></td></tr>
<tr><th>5</th><td>顶标高(m)</td><td>层底标高</td><td></td></tr>
<tr><th>6</th><td>底标高(m)</td><td>层底标高</td><td></td></tr>
<tr><th>7</th><td>扣减板/筏板面筋</td><td>全部扣减</td><td></td></tr>
<tr><th>8</th><td>扣减板/筏板底筋</td><td>全部扣减</td><td></td></tr>
<tr class="active"><th>9</th><td>计算设置</td><td>按默认计算设置计算</td><td></td></tr>
<tr><th>10</th><td>搭接设置</td><td>按默认搭接设置计算</td><td></td></tr>
<tr><th>11</th><td>保护层厚度(mm)</td><td>(40)</td><td></td></tr>
<tr><th>12</th><td>汇总信息</td><td>独立基础</td><td></td></tr>
<tr><th>13</th><td>备注</td><td></td><td></td></tr>
<tr><th>14</th><td class="dim group"><button class="box">+</button>显示样式</td><td></td><td></td></tr>
</tbody>
</table>
</div>
</section>

<section class="win dialog" role="dialog" aria-labelledby="dlg-title">
<header><svg class="ic"><use href="#app"/></svg><h1 id="dlg-title">计算参数设置</h1>
<button class="wb min" aria-label="最小化"><svg><path d="M4 15h7" stroke="#fff" stroke-width="3" opacity=".6"/></svg></button>
<button class="wb" aria-label="最大化"><svg><path d="M4.500 5.500h10v9h-10zM4 6.500h11" fill="none" stroke="#fff" stroke-width="2"/></svg></button>
<button class="wb x" aria-label="关闭"><svg><path d="M5 5l9 9M14 5l-9 9" stroke="#fff" stroke-width="2.500"/></svg></button></header>
<div class="body">
<div class="frame">
<div class="sheet">
<table>
<colgroup><col class="c-num"><col class="c-key"><col class="c-val"></colgroup>
<thead><tr><th></th><th>类型名称</th><th class="hot">设置值</th></tr></thead>
<tbody>
<tr><th>1</th><td class="dim group"><button class="box">−</button>公共设置项</td><td></td></tr>
<tr><th>2</th><td class="dim sub last">纵筋搭接接头错开百分率</td><td class="dim">50%</td></tr>
<tr><th>3</th><td class="dim group"><button class="box">+</button>条形基础</td><td></td></tr>
<tr><th>14</th><td class="dim group"><button class="box">−</button>独立基础</td><td></td></tr>
<tr><th>15</th><td class="sub">独立基础边缘第一根钢筋距基础边的距离</td><td>min(75,s/2)</td></tr>
<tr><th>16</th><td class="sub">独基受力筋长度计算设定值</td><td>2500</td></tr>
<tr class="editing"><th>17</th><td class="sub">独立基础边长≥设定值时,受力钢筋长度为</td><td class="pick"><span>0.9*边长</span><button aria-label="展开选项"><svg><path d="M3 5l4 4 4-4" fill="none" stroke="#2f4f8a" stroke-width="2.500"/></svg></button>
<ul class="options" role="listbox"><li role="option" aria-selected="true">0.9*边长</li><li role="option">边长-2*保护层</li><li role="option">四周钢筋:边长-2*bhc,其余钢筋:0.9*边长</li><li role="option">0.9*(边长-2*保护层)</li></ul></td></tr>
<tr><th>18</th><td class="sub">独立基础钢筋根数计算方式</td><td></td></tr>
<tr><th>19</th><td class="sub">独立基础下部钢筋弯折长度</td><td></td></tr>
<tr><th>20</th><td class="sub">独立基础上部钢筋弯折长度</td><td>0</td></tr>
<tr><th>21</th><td class="sub">独基钢筋按平均长度计算</td><td>否</td></tr>
<tr><th>22</th><td class="sub">独基与基础梁平行重叠部位是否布置独基钢筋</td><td>否</td></tr>
<tr><th>23</th><td class="sub last">杯口短柱在基础锚固区内的箍筋数量</td><td>3</td></tr>
<tr><th>24</th><td class="dim group"><button class="box">+</button>筏形基础</td><td></td></tr>
<tr><th>40</th><td class="dim group"><button class="box">+</button>桩承台</td><td></td></tr>
<tr><th></th><td></td><td></td></tr>
</tbody>
</table>
</div>
<div class="scroll"><button aria-label="向上"><svg><path d="M3 9l4-4 4 4" fill="none" stroke="#4d6185" stroke-width="2.500"/></svg></button><div class="thumb"></div><div class="track"></div><button aria-label="向下"><svg><path d="M3 5l4 4 4-4" fill="none" stroke="#4d6185" stroke-width="2.500"/></svg></button></div>
</div>
<p>提示信息：提供四种选择，前两种来源《简明钢筋混凝土结构构造手册》第408页。</p>
<footer><button>确定</button><button>取消</button></footer>
</div>
</section>

<svg class="marks" aria-hidden="true" fill="none" stroke="#f0403c">
<ellipse cx="230.500" cy="129" rx="27.500" ry="34"/><ellipse cx="525.500" cy="581" rx="33.500" ry="23"/><ellipse cx="1196" cy="454" rx="18" ry="33"/>
<path d="M244 160L397 376 517 549 523 544 524 561 508 555 514 552 394 378z" fill="#ff3b36" stroke="none"/>
<path d="M244 160L396 377"/>
<path d="M541 562L850 512 1153 464 1152 460 1168 466 1154 474 1154 469 850 516z" fill="#ff3b36" stroke="none"/>
<path d="M541 562L850 514"/>
</svg>
</body>
</html>
```

FILE: styles.css
```css
* { box-sizing: border-box; }

body {
  margin: 0;
  height: 100vh;
  overflow: hidden;
  position: relative;
  display: flex;
  flex-direction: column;
  background: #ece9d8;
  color: #000;
  font: 12px/16px "Noto Sans Mono CJK SC", "Noto Sans CJK SC", sans-serif;
}

button, input, select {
  margin: 0;
  padding: 0;
  border: 0;
  background: none;
  color: inherit;
  font: inherit;
}

ul { list-style: none; margin: 0; padding: 0; }
.defs { position: absolute; width: 0; height: 0; }
.ic { width: 16px; height: 16px; flex: none; display: block; }

/* menu strip */
.menu {
  flex: none;
  height: 14px;
  overflow: hidden;
  display: flex;
  align-items: flex-end;
  gap: 10px;
  padding: 0 7px 7px;
}
.menu button { flex: none; display: flex; align-items: center; gap: 3px; white-space: nowrap; }
.menu .user { margin-left: 8px; }

/* toolbars */
.bars { flex: none; display: flex; gap: 3px; overflow: hidden; margin-bottom: 2px; }
.bar {
  flex: none;
  height: 24px;
  display: flex;
  align-items: center;
  padding: 0 0 0 4px;
  border-radius: 3px;
  background: linear-gradient(#fcfbf8, #f5f3ea 50%, #ebe7d6);
  white-space: nowrap;
}
.bar.grow { flex: 1 0 auto; }
.bar.views { padding-left: 0; }
.bar button { flex: none; display: flex; align-items: center; gap: 4px; margin-right: 7px; height: 20px; }
.bar button:disabled { color: #aca899; }
.bar button.on { height: 22px; padding: 0 3px; border: 1px solid #316ac5; background: #e1e6e8; margin-right: 3px; }
.bar button.tight { margin-right: 3px; }
.sep { flex: none; width: 2px; height: 18px; margin-right: 4px; border-left: 1px solid #c0bcab; border-right: 1px solid #fff; }
.sep.thin { margin-right: 1px; margin-left: 3px; }
.grip { flex: none; width: 3px; height: 16px; background: repeating-linear-gradient(#c3bfae 0 2px, transparent 2px 4px); }
.edit .grip { margin-right: 4px; }
.dn { flex: none; width: 0; height: 0; border: 3px solid transparent; border-top-color: #000; border-bottom-width: 0; }
button:disabled .dn { border-top-color: #aca899; }
.files .dn { margin-left: 3px; }
.files button:last-child { margin-right: 3px; }
.sigma { text-align: center; font: bold 16px/16px "Liberation Serif", serif; }

.combo { flex: none; position: relative; width: 69px; height: 18px; margin-right: 3px; display: flex; align-items: center; background: #fff; }
.combo.short { width: 57px; }
.combo.view { width: 61px; margin-right: 5px; padding-left: 3px; gap: 2px; }
.combo.off { width: 56px; margin-right: 5px; border: 1px solid #aca899; background: #f5f3ea; }
.combo select { appearance: none; flex: 1; min-width: 0; height: 18px; padding-left: 2px; }
.combo::after { content: ""; position: absolute; right: 3px; top: 8px; border: 3px solid transparent; border-top-color: #000; border-bottom-width: 0; }
.combo::before { content: ""; position: absolute; right: 0; top: 1px; bottom: 1px; width: 11px; background: #f0ede2; }
.combo.off::after { border-top-color: #aca899; }

/* docked panes */
.main { flex: 1; min-height: 0; display: flex; margin-top: 1px; }
.pane { flex: none; display: flex; flex-direction: column; overflow: hidden; }
.nav { width: 165px; border-right: 1px solid #9c9a8c; margin-right: 4px; }
.list { width: 165px; border-left: 1px solid #9c9a8c; margin-right: 3px; }
.cap { flex: none; height: 15px; margin-bottom: 2px; display: flex; align-items: center; gap: 8px; padding-right: 4px; border: 1px solid #77756a; border-radius: 2px; line-height: 13px; }
.cap span { flex: 1; }
.cap button, .cap svg { width: 10px; height: 10px; display: block; }
.sect { flex: none; height: 22px; border: 1px solid #aca899; border-top-color: #fff; border-right: 0; }
.plusminus { flex: none; height: 28px; display: flex; gap: 5px; align-items: center; padding-left: 7px; border-top: 1px solid #aca899; background: linear-gradient(#f6f4ec, #ebe7d6); }
.plusminus svg { width: 17px; height: 17px; display: block; }
.tools { margin-bottom: 2px; }
.search { flex: none; height: 24px; display: flex; margin-bottom: 1px; background: linear-gradient(#fcfbf8, #ebe7d6); }
.search input { flex: 1; min-width: 0; border: 1px solid #7f9db9; background: #fff; padding: 0 2px 4px; }
.search input::placeholder { color: #808080; opacity: 1; }
.search button { width: 24px; display: grid; place-items: center; }

.tree { flex: 1; position: relative; border: 1px solid #7f9db9; border-width: 1px 1px 0; background: #fff; white-space: nowrap; overflow: hidden; }
.nav .tree { margin-left: 2px; }
.node { position: relative; height: 16px; display: flex; align-items: center; padding-left: 8px; }
.node .ic { margin: 0 4px 0 6px; }
.exp {
  position: relative;
  flex: none;
  width: 9px;
  height: 9px;
  border: 1px solid #7898b5;
  background: linear-gradient(#fff, #d8d4c6);
  font: bold 9px/8px "Liberation Mono", monospace;
}
.node::before { content: ""; position: absolute; left: 18px; top: 8px; width: 5px; border-top: 1px dotted #a19f92; }
.tree > li { position: relative; }
.tree > li:not(:last-child)::before { content: ""; position: absolute; left: 12px; top: 8px; bottom: -8px; border-left: 1px dotted #a19f92; }
.tree ul { position: relative; }
.tree ul::before { content: ""; position: absolute; left: 31px; top: 0; bottom: 8px; border-left: 1px dotted #a19f92; }
.tree ul li { height: 16px; display: flex; align-items: center; padding-left: 32px; }
.tree ul li::before { content: ""; width: 10px; border-top: 1px dotted #a19f92; }
.tree ul .ic { margin-right: 3px; }
.tree ul span { padding: 0 1px; line-height: 16px; }
.tree .cur { background: #ece9d8; padding-right: 6px; }
.tree .sel { background: #316ac5; color: #000; padding: 0 5px 0 1px; }
.node .cad { margin: 0 1px 0 5px; }
.badge { align-self: flex-start; background: #ffe800; font: bold 8px/8px "DejaVu Sans", sans-serif; }

/* drawing area */
.work { flex: 1; min-width: 0; display: flex; flex-direction: column; }
.work .stub { width: 32px; }
.canvas { flex: 1; min-height: 0; margin-top: -1px; background: #000; }
.canvas svg { display: block; width: 100%; height: 100%; }
.cadtext { font: 16px "Liberation Sans", sans-serif; fill: #d8d8d8; text-anchor: middle; }

/* grids */
.win { position: absolute; }
table { border-collapse: separate; border-spacing: 0; table-layout: fixed; width: 100%; }
td, th { height: 19px; padding: 0 2px; border: 0 solid #c0c0c0; border-width: 0 1px 1px 0; font-weight: normal; line-height: 18px; text-align: left; white-space: nowrap; }
th { padding: 0; text-align: center; background: linear-gradient(90deg, #fff, #ece9d8); }
thead th { height: 23px; background: linear-gradient(#fff, #ece9d8); }
thead th.hot { background: linear-gradient(#f9d9a0, #f2c263); color: #600040; }
.dim { color: #808080; }
.blue { color: #00f; }
.box { width: 13px; height: 13px; margin: 3px 4px 0 0; vertical-align: top; border: 1px solid #b5b5b5; background: linear-gradient(#fff, #e3e3e3); color: #000; font: 12px/11px "Liberation Mono", monospace; }
.c-num { width: 21px; }

.props { left: 281px; top: 379px; bottom: 0; width: 423px; display: flex; flex-direction: column; padding: 0 4px 0 5px; background: #7889dc; }
.props header { height: 22px; margin-left: -3px; color: #dbe6fa; font: bold 13px/22px "Noto Sans CJK SC", sans-serif; background: linear-gradient(#8ba5ea, #7994e0 40%, #8099e4); }
.props .sheet { flex: 1; background: #fff; padding-top: 1px; }
.props .c-key { width: 121px; }
.props .c-val { width: 238px; }
.props td:nth-child(2) { padding-left: 19px; }
.props td.group { padding-left: 2px; }
.props .active th { background: #ffd590; color: #600040; }
.props .active td { background: #e1e8f5; }
.props .active td:nth-child(2) { background: #316ac5; color: #fff; }

.dialog { left: 560px; top: 262px; width: 672px; padding: 0 4px 4px; border-radius: 7px 7px 0 0; background: linear-gradient(90deg, #001ea0, #0046e0 3px, #0046e0 calc(100% - 3px), #001ea0); box-shadow: inset 0 -2px #001ea0; }
.dialog header { height: 29px; margin: 0 -4px; padding: 1px 5px 0 6px; display: flex; align-items: center; gap: 2px; border-radius: 7px 7px 0 0; background: linear-gradient(#0a4fd0, #3b92ff 2px, #0459e4 5px, #0054e3 50%, #0668ff 88%, #003fc4); }
.dialog h1 { flex: 1; margin: 0 0 0 2px; color: #fff; font: bold 14px/20px "Noto Sans CJK SC", sans-serif; text-shadow: 1px 1px #0a1883; }
.wb { width: 21px; height: 21px; border: 1px solid #fff; border-radius: 3px; background: linear-gradient(135deg, #6f9bf8, #1b4ed8 60%, #2a63ef); }
.wb svg { display: block; width: 19px; height: 19px; }
.wb.min { background: #2a5bdc; border-color: #7fa5f2; }
.wb.x { background: linear-gradient(135deg, #f09a80, #d9432a 60%, #c5351a); }
.body { padding: 3px 2px 7px 3px; background: #ece9d8; }
.frame { height: 315px; display: flex; padding: 1px; border: 1px solid #7f9db9; background: #fff; }
.frame .sheet { flex: 1; min-width: 0; overflow: hidden; }
.dialog .c-key { width: 296px; }
.dialog td:nth-child(2) { background: #ffffe1; }
.dialog tbody td.sub { position: relative; padding-left: 29px; }
.sub::before { content: ""; position: absolute; left: 8px; top: -3px; bottom: 0; border-left: 1px solid #c0c0c0; }
.sub::after { content: ""; position: absolute; left: 8px; top: 9px; width: 16px; border-top: 1px solid #c0c0c0; }
.sub.last::before { bottom: 9px; }
.editing th { background: #ffd590; color: #600040; }
.pick { position: relative; }
.pick > button { float: right; width: 15px; height: 15px; margin-top: 1px; background: #9db6ee; }
.pick svg, .scroll svg { display: block; width: 14px; height: 14px; }
.options { position: absolute; z-index: 1; left: 0; right: 0; top: 18px; padding: 1px 1px 0; border: 1px solid #000; background: #fff; }
.options li { height: 12px; line-height: 12px; }
.options [aria-selected] { background: #316ac5; color: #fff; outline: 1px dotted #d08a30; outline-offset: -1px; }
.scroll { flex: none; width: 18px; display: flex; flex-direction: column; padding: 1px 1px 1px 2px; gap: 1px; background: #f4f2ea; }
.scroll button { width: 15px; height: 15px; border: 1px solid #a9c1f0; border-radius: 2px; background: #c6d6fb; }
.thumb { flex: 0 0 246px; border: 1px solid #a9c1f0; border-radius: 2px; background: repeating-linear-gradient(#eaf1ff 0 1px, #9db8f0 1px 2px) center / 7px 8px no-repeat, linear-gradient(90deg, #cbdafc, #b9ccf9); }
.track { flex: 1; }
.dialog p { margin: 3px 0 0; line-height: 16px; }
.dialog footer { display: flex; justify-content: flex-end; gap: 14px; padding: 40px 10px 0 0; }
.dialog footer button { width: 73px; height: 24px; border: 1px solid #003c74; border-radius: 3px; background: linear-gradient(#fff, #f2f1ea 85%, #dcd8cb); }

.marks { position: absolute; z-index: 2; left: 0; top: 0; width: 100%; height: 100%; pointer-events: none; }
```
